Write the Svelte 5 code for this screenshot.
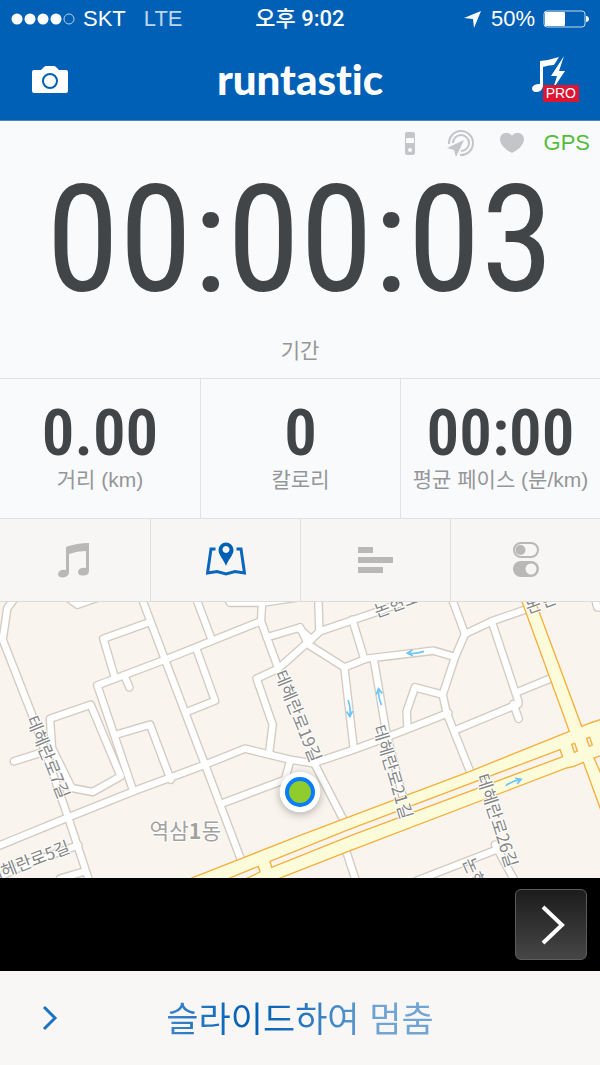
<script lang="ts">
	let elapsed = $state('00:00:03');
	let activeTab = $state('map');

	const stats = [
		{ value: '0.00', label: '거리 (km)' },
		{ value: '0', label: '칼로리' },
		{ value: '00:00', label: '평균 페이스 (분/km)' },
	];

	const tabs = [
		{ id: 'music', label: 'Music' },
		{ id: 'map', label: 'Map' },
		{ id: 'splits', label: 'Splits' },
		{ id: 'settings', label: 'Settings' },
	];

	// map geometry, three units per pixel
	const roads = [
		'M45 0 L22 30 L8 125 L100 360 L205 660 L268 850',
		'M-20 750 L200 660 L400 580 L615 500 L735 452 L870 485 L940 496 L1060 455 L1150 422 L1345 345',
		'M425 0 L495 185 L615 500 L725 790',
		'M588 0 L635 125',
		'M400 580 L292 262 L495 185 L782 70',
		'M450 72 L310 122 L345 240',
		'M375 238 L388 268',
		'M590 155 L645 308 L565 340',
		'M355 408 L450 380 L512 545',
		'M272 320 L150 362 L156 450 L215 570 L278 582 L362 535 Z',
		'M42 490 L130 462',
		'M205 0 L232 20 L290 0',
		'M680 -4 L690 14 L790 14 L910 -4',
		'M787 0 L783 70 L835 212',
		'M800 118 L895 90 L935 125',
		'M808 460 L818 380 L770 242 L835 212 L960 100 L1130 42 L1240 0',
		'M870 490 L855 545 L670 615',
		'M-10 840 L100 790 L235 742',
		'M180 842 L255 820',
		'M955 0 L958 100',
		'M900 88 L925 140 L1033 208 L1100 182 L1300 158 L1362 176',
		'M1057 65 L1092 180',
		'M1033 208 L1061 450',
		'M1121 182 L1160 410 L1220 640',
		'M1355 0 L1395 108 L1365 178 L1328 290 L1340 345 L1412 525',
		'M1395 108 L1475 70 L1590 30',
		'M1475 70 L1555 310',
		'M1540 318 L1556 362',
		'M1550 283 L1655 240',
		'M1370 395 L1555 318',
		'M1328 290 L1245 268 L1220 340 L1222 385',
		'M945 500 L1030 665',
		'M1037 755 L1068 850',
		'M1250 848 L1490 755',
		'M1485 740 L1545 850',
		'M1785 0 L1792 28 L1820 30',
	];

	const arrows = [
		{ x: 1246, y: 164, angle: 176 },
		{ x: 1048, y: 332, angle: 86 },
		{ x: 1139, y: 296, angle: -98 },
		{ x: 1541, y: 552, angle: -20 },
	];

	const streets = [
		{ name: '테헤란로7길', x: 144, y: 477, angle: 68 },
		{ name: '테헤란로19길', x: 894, y: 354, angle: 68 },
		{ name: '테헤란로21길', x: 1178, y: 522, angle: 73 },
		{ name: '테헤란로26길', x: 1491, y: 668, angle: 72 },
		{ name: '테헤란로5길', x: 84, y: 792, angle: -21 },
		{ name: '논현로', x: 1190, y: 18, angle: -20 },
		{ name: '논현로', x: 1644, y: 6, angle: -20 },
		{ name: '논현로', x: 1432, y: 846, angle: 66 },
	];
</script>

<div class="screen">
	<header class="header">
		<div class="status-bar">
			<div class="carrier">
				<svg class="signal" viewBox="0 0 64 12" aria-hidden="true">
					{#each [6, 19, 32, 45] as cx}
						<circle {cx} cy="6" r="5.5" />
					{/each}
					<circle class="empty" cx="58" cy="6" r="5" />
				</svg>
				<span>SKT</span>
				<span class="network">LTE</span>
			</div>
			<div class="clock">오후 9:02</div>
			<div class="power">
				<svg class="location" viewBox="0 0 17 17" aria-hidden="true"><path d="M17 0 L10 17 L9 8 L0 7 Z" /></svg>
				<span>50%</span>
				<svg class="battery" viewBox="0 0 46 18" aria-hidden="true">
					<rect class="shell" x="1" y="1" width="41" height="16" rx="3" />
					<rect x="2" y="2" width="20" height="14" rx="1" />
					<path d="M43 6 C47 6 47 12 43 12 Z" />
				</svg>
			</div>
		</div>
		<nav class="nav-bar">
			<button class="nav-btn" aria-label="Camera">
				<svg class="camera" viewBox="0 0 36 27">
					<path d="M2 4 H9 L12 1 Q13 0 14 0 H22 Q23 0 24 1 L27 4 H34 Q36 4 36 6 V25 Q36 27 34 27 H2 Q0 27 0 25 V6 Q0 4 2 4 Z" />
					<circle cx="18" cy="15" r="7" />
				</svg>
			</button>
			<h1 class="logo">runtastic</h1>
			<button class="nav-btn" aria-label="Music">
				<span class="pro-icon">
					<svg viewBox="0 0 34 36">
						<path d="M8 5 Q18 4 27 1 L22 9 Q17 9 11 11 V30 Q10 36 4 36 Q0 36 0 32 Q1 28 8 28 Z" />
						<path d="M32 0 L19 20 H25 L21 33 L33 15 H27 Z" />
					</svg>
					<span class="pro-badge">PRO</span>
				</span>
			</button>
		</nav>
	</header>

	<section class="timer">
		<div class="sensors">
			<svg class="sensor-pod" viewBox="0 0 10 23" aria-hidden="true">
				<path fill-rule="evenodd" d="M2 0 H8 Q10 0 10 2 V21 Q10 23 8 23 H2 Q0 23 0 21 V2 Q0 0 2 0 Z M2 6 Q1 6 1 7 V11 H9 V7 Q9 6 8 6 Z M5 16 a2 2 0 1 0 .01 0 Z" />
			</svg>
			<svg class="sensor-live" viewBox="0 0 27 27" aria-hidden="true">
				<path class="arc" d="M2 14 A12 12 0 1 1 13 25" />
				<path class="arc" d="M6 13 A8 8 0 1 1 14 21" />
				<path d="M17 10 L9 27 L7 20 L0 18 Z" />
			</svg>
			<svg class="sensor-heart" viewBox="0 0 24 20" aria-hidden="true">
				<path d="M12 20 C8 18 0 13 0 6 C0 -1 9 -2 12 3 C15 -2 24 -1 24 6 C24 13 16 18 12 20 Z" />
			</svg>
			<span class="gps">GPS</span>
		</div>
		<div class="elapsed">{elapsed}</div>
		<div class="label">기간</div>
	</section>

	<section class="stats">
		{#each stats as stat}
			<div class="stat">
				<div class="stat-value">{stat.value}</div>
				<div class="label">{stat.label}</div>
			</div>
		{/each}
	</section>

	<div class="tabs" role="tablist">
		{#each tabs as tab}
			<button
				class="tab"
				class:active={activeTab === tab.id}
				role="tab"
				aria-label={tab.label}
				aria-selected={activeTab === tab.id}
				onclick={() => (activeTab = tab.id)}
			>
				<svg viewBox="0 0 40 36">
					{#if tab.id === 'music'}
						<path d="M11 5 Q22 1 34 1 V29 Q34 33 29 33.5 Q23 34 23 30 Q24 25 31 26 V9 Q22 9 14 12 V31 Q13 35 8 35.5 Q3 35.5 3 32 Q4 27 11 28 Z" />
					{:else if tab.id === 'map'}
						<path class="line" d="M9.5 7 H5 L1.5 31 L11 29.5 L20 32 L29 29.5 L38.5 31 L35 7 H30.5" />
						<path fill-rule="evenodd" d="M20 24 C18 18 12.5 13 12.5 8 A7.5 7.5 0 0 1 27.5 8 C27.5 13 22 18 20 24 Z M20 4 a3.5 3.5 0 1 0 .01 0 Z" />
					{:else if tab.id === 'splits'}
						<path d="M2 5 H17 V11 H2 Z M2 15 H37 V21 H2 Z M2 25 H27 V31 H2 Z" />
					{:else}
						<rect class="thin" x="8" y="1" width="24" height="14" rx="7" />
						<circle cx="14.5" cy="8" r="5" />
						<rect x="7" y="19" width="26" height="16" rx="8" />
						<circle class="knob" cx="25" cy="27" r="5.5" />
					{/if}
				</svg>
			</button>
		{/each}
	</div>

	<svg class="map" viewBox="0 12 1800 828" role="img" aria-label="역삼1동">
		<rect class="land" y="12" width="1800" height="828" />
		{#each roads as d}
			<path class="road-edge" {d} />
		{/each}
		{#each roads as d}
			<path class="road" {d} />
		{/each}
		<path class="highway" d="M560 846 L900 712 L1410 520 L1708 400 L1562 0 H1602 L1745 385 L1770 375 L1810 362 V470 L1782 480 L1815 555 V670 L1750 493 L1722 505 L1700 510 L1045 760 L815 850 Z" />
		<path class="median" d="M810 790 L1040 697 L1680 455 L1688 476 L1060 710 L815 808 Z" />
		<path class="median" d="M680 844 L775 805 L780 822 L730 846 Z" />
		<path class="median" d="M1715 439 L1724 436 L1732 459 L1723 463 Z" />
		<path class="median" d="M1760 421 L1769 418 L1777 441 L1768 445 Z" />
		{#each arrows as arrow}
			<path class="arrow" d="M-26 2 Q0 -5 20 0 M8 -9 L24 0 L8 9" transform="translate({arrow.x} {arrow.y}) rotate({arrow.angle})" />
		{/each}
		{#each streets as street}
			<text class="street" transform="translate({street.x} {street.y}) rotate({street.angle})" dy="18">{street.name}</text>
		{/each}
		<text class="district" x="556" y="722">역삼<tspan class="num">1</tspan>동</text>
		<g class="marker">
			<circle class="halo" cx="900" cy="582" r="61" />
			<circle class="ring" cx="900" cy="582" r="45" />
			<circle class="dot" cx="900" cy="582" r="33" />
		</g>
	</svg>

	<div class="banner">
		<button class="banner-btn" aria-label="Open">
			<svg viewBox="0 0 24 40"><path d="M2 2 L21 20 L2 38" /></svg>
		</button>
	</div>

	<button class="slide">
		<svg viewBox="0 0 16 26" aria-hidden="true"><path d="M2 2 L13 13 L2 24" /></svg>
		<span>슬라이드하여 멈춤</span>
	</button>
</div>

<style>
	:global(body) { margin: 0; background: #f8f7f5; }
	.screen {
		display: flex; flex-direction: column;
		min-height: 100vh;
		font-family: 'Liberation Sans', 'Noto Sans CJK KR', sans-serif;
		color: #424547;
	}
	button { padding: 0; border: none; background: none; font-family: inherit; cursor: pointer; }

	.header { background: #0060b5; color: #fff; border-bottom: 1px solid #4e86bb; }
	.header svg { fill: #fff; }
	.status-bar {
		display: grid; grid-template-columns: 1fr auto 1fr; align-items: center;
		height: 38px; padding: 0 11px;
		font-size: 22px; line-height: 24px;
	}
	.carrier, .power { display: flex; align-items: center; gap: 8px; }
	.power { justify-content: flex-end; }
	.signal { width: 64px; height: 12px; }
	.header .signal .empty { fill: none; stroke: #b5d0ea; }
	.network { margin-left: 10px; color: #bcd5ed; }
	.clock { font-family: Roboto, 'Noto Sans CJK KR', sans-serif; font-weight: 500; }
	.location { width: 17px; height: 17px; margin-right: 2px; }
	.battery { width: 46px; height: 18px; }
	.header .battery .shell { fill: none; stroke: #c4daee; }
	.nav-bar { display: grid; grid-template-columns: 1fr auto 1fr; align-items: center; height: 82px; padding: 0 20px 0 32px; }
	.nav-btn { display: flex; width: 48px; }
	.nav-btn:last-child { justify-self: end; }
	.camera { width: 36px; height: 27px; }
	.camera circle { stroke: #0060b5; stroke-width: 2; }
	.logo {
		margin: 0 12px 0 0;
		font-family: Lato, sans-serif; font-size: 42px; line-height: 48px; font-weight: 900;
		font-variant-ligatures: none;
	}
	.pro-icon { position: relative; display: block; width: 48px; height: 46px; }
	.pro-icon svg { display: block; width: 34px; height: 36px; }
	.pro-badge {
		position: absolute; right: 1px; bottom: 0;
		padding: 0 3px; background: #db1532; color: #fff;
		font-size: 14px; line-height: 17px;
	}

	.timer { display: flex; flex-direction: column; background: #f9fafc; text-align: center; padding-bottom: 13px; }
	.sensors { display: flex; align-items: center; justify-content: flex-end; gap: 26px; height: 44px; padding-right: 10px; }
	.sensors svg { fill: #c3c5c9; }
	.sensor-pod { width: 10px; height: 23px; margin-right: 6px; }
	.sensor-live { width: 27px; height: 27px; }
	.sensor-live .arc { fill: none; stroke: #c3c5c9; stroke-width: 2; }
	.sensor-heart { width: 24px; height: 20px; }
	.gps { margin-left: -6px; color: #55bd3b; font-size: 22px; line-height: 24px; }
	.elapsed {
		margin-bottom: 20px;
		font-family: 'Roboto Condensed', 'DejaVu Sans Condensed', sans-serif;
		font-size: 148px; line-height: 152px;
	}
	.label { color: #949698; font-size: 21px; line-height: 28px; white-space: nowrap; }

	.stats { display: grid; grid-template-columns: repeat(3, 1fr); background: #f9fafc; border-top: 1px solid #dfe1e3; text-align: center; }
	.stat { padding: 22px 0 24px; }
	.stat + .stat { border-left: 1px solid #dfe1e3; }
	.stat-value {
		font-family: 'Roboto Condensed', 'DejaVu Sans Condensed', sans-serif;
		font-size: 65px; line-height: 65px; font-weight: 600;
	}

	.tabs { display: grid; grid-template-columns: repeat(4, 1fr); background: #f7f6f4; border-top: 1px solid #dfe1e1; border-bottom: 1px solid #dddcda; }
	.tab { display: flex; align-items: center; justify-content: center; height: 82px; }
	.tab + .tab { border-left: 1px solid #dfdfde; }
	.tab svg { width: 40px; height: 36px; fill: #b9b8b6; }
	.tab .thin { fill: none; stroke: #b9b8b6; stroke-width: 2; }
	.tab .knob { fill: #f7f6f4; }
	.tab .line { fill: none; stroke: #0a67bb; stroke-width: 3; }
	.tab.active svg { fill: #0060b5; }

	.map { display: block; width: 100%; }
	.land { fill: #f9f4ed; }
	.road-edge, .road { fill: none; stroke-linecap: round; stroke-linejoin: round; }
	.road-edge { stroke: #d3cbc1; stroke-width: 27; }
	.road { stroke: #fff; stroke-width: 19; }
	.highway { fill: #fcfbda; stroke: #f5b03c; stroke-width: 4; }
	.median { fill: #f9f4ed; stroke: #f5b03c; stroke-width: 4; }
	.arrow { fill: none; stroke: #6cc4fa; stroke-width: 5; }
	.street, .district {
		font-family: 'Noto Sans CJK KR', sans-serif;
		text-anchor: middle; paint-order: stroke; stroke: #fff; stroke-width: 6; stroke-linejoin: round;
	}
	.street { font-size: 51px; fill: #858585; }
	.district { font-size: 64px; fill: #a3a19e; }
	.num { font-weight: 700; }
	.halo { fill: #fff; filter: drop-shadow(0 6px 12px rgba(0, 0, 0, 0.3)); }
	.ring { fill: #087cfa; }
	.dot { fill: #90cc2c; }

	.banner { display: flex; justify-content: flex-end; align-items: center; padding: 11px 13px; background: #000; }
	.banner-btn {
		display: flex; align-items: center; justify-content: center;
		width: 72px; height: 71px;
		border: 1px solid #5c5c5c; border-radius: 6px;
		background: linear-gradient(#1c1c1c, #464646);
	}
	.banner-btn svg { width: 24px; height: 40px; margin-left: 4px; }
	.banner-btn path { fill: none; stroke: #fff; stroke-width: 4; }

	.slide {
		position: relative;
		display: flex; flex: 1; align-items: center; justify-content: center;
		min-height: 94px;
		background: #f8f7f5;
	}
	.slide svg { position: absolute; left: 42px; width: 16px; height: 26px; }
	.slide path { fill: none; stroke: #1a72c2; stroke-width: 3; }
	.slide span {
		padding-top: 4px;
		font-size: 35px; line-height: 48px;
		background: linear-gradient(90deg, #3f86c8, #0060b5 30%, #0f69ba 42%, #70a4d3 80%);
		background-clip: text; -webkit-background-clip: text; color: transparent;
	}
</style>
